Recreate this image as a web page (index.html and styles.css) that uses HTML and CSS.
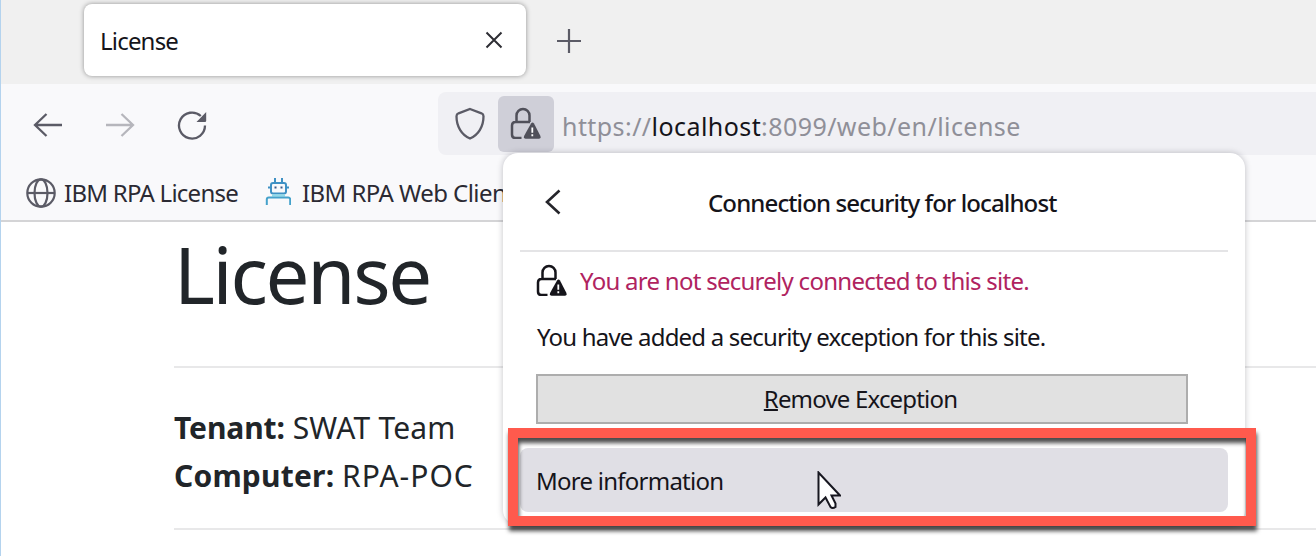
FILE: index.html
```html
<!DOCTYPE html>
<html lang="en">
<head>
<meta charset="utf-8">
<title>License</title>
<link rel="stylesheet" href="styles.css">
</head>
<body>
<svg class="defs" width="0" height="0">
  <symbol id="lock-warning" viewBox="0 0 30 32">
    <path d="M6 15V8.500a6.500 6.500 0 0 1 13 0V15M11 31H5q-3.500 0-3.500-3.500V18.500q0-3.500 3.500-3.500h14.500" fill="none" stroke="currentColor" stroke-width="2.500"/>
    <path d="M20.500 16.500q1.500-2 3 0l6.300 12.200q1 3-1.300 3H15q-2.300 0-1.300-3z" fill="currentColor"/>
    <path d="M21.800 20.500v5.200M21.800 27.300v2" stroke="#fff" stroke-width="1.800"/>
  </symbol>
</svg>
<div class="browser">
  <header class="tab-bar">
    <div class="tab">
      <span class="t tab-title">License</span>
      <svg class="close" viewBox="0 0 18 18"><path d="M1.500 1.500l15 15M16.500 1.500l-15 15"/></svg>
    </div>
    <svg class="plus" viewBox="0 0 26 26"><path d="M13 1v24M1 13h24"/></svg>
  </header>
  <nav class="nav-bar">
    <div class="controls">
      <svg class="arrow" viewBox="0 0 30 26"><path d="M29 13H2M13.500 2L2 13l11.500 11"/></svg>
      <svg class="arrow forward" viewBox="0 0 30 26"><path d="M1 13h27M16.500 2L28 13 16.500 24"/></svg>
      <svg class="reload" viewBox="0 0 32 30"><path d="M29 15.500A13 13 0 1 1 24.800 6" fill="none" stroke="currentColor" stroke-width="2.300"/><path d="M30.200 2v8.800q0 1.200-1.200 1.200H20.500z" fill="currentColor"/></svg>
    </div>
    <div class="url-bar">
      <svg class="shield" viewBox="0 0 30 32"><path d="M15 1.500l11.500 4.300q2 .8 2 3C28.500 19 23.500 27.500 15 31 6.500 27.500 1.500 19 1.500 8.800q0-2.200 2-3z"/></svg>
      <span class="identity"><svg class="lock"><use href="#lock-warning"/></svg></span>
      <span class="t url">https://<b>localhost</b>:8099/web/en/license</span>
    </div>
  </nav>
  <div class="bookmarks">
    <svg class="globe" viewBox="0 0 30 30"><circle cx="15" cy="15" r="13.700"/><ellipse cx="15" cy="15" rx="6.500" ry="13.700"/><path d="M1.500 15h27"/></svg>
    <span class="t bookmark-license">IBM RPA License</span>
    <svg class="robot" viewBox="0 0 26 28"><g fill="none" stroke="#3f91c4" stroke-width="2"><path d="M10 0v5M17 0v5M3 9.500h3M21 9.500h3"/><rect x="6" y="5" width="15" height="10.500" rx="2"/><path d="M7 17.500h13" stroke="#8fdcea"/><path d="M1.800 27v-5.500q0-2 2-2h19.400q2 0 2 2V27" stroke="#45a2cb"/></g><path d="M9.500 8.500h2v2h-2zM15.500 8.500h2v2h-2z" fill="#3b5a88"/></svg>
    <span class="t bookmark-client">IBM RPA Web Client</span>
  </div>
  <main class="page">
    <h1 class="t heading">License</h1>
    <div class="details">
      <p class="t"><b class="tenant-key">Tenant:</b> <span class="tenant">SWAT Team</span></p>
      <p class="t"><b class="computer-key">Computer:</b> <span class="computer">RPA-POC</span></p>
    </div>
  </main>
</div>
<section class="panel">
  <div class="panel-header">
    <svg class="chevron" viewBox="0 0 16 26"><path d="M14.500 1.500L2 13l12.500 11.500"/></svg>
    <span class="t panel-title">Connection security for localhost</span>
  </div>
  <div class="status"><svg class="lock"><use href="#lock-warning"/></svg><span class="t insecure">You are not securely connected to this site.</span></div>
  <p class="t exception">You have added a security exception for this site.</p>
  <div class="remove"><span class="t remove-label"><u>R</u>emove Exception</span></div>
  <div class="more"><span class="t more-label">More information</span></div>
</section>
<div class="highlight"></div>
<svg class="cursor" viewBox="0 0 24 39"><path d="M1.500 1.500v32l7-7 5 9.500q2 2 5 0v-3.500l-4-8h8.500z" fill="#fff" stroke="#171720" stroke-width="2"/></svg>
</body>
</html>
```
FILE: styles.css
```css
* { box-sizing: border-box; }
body {
  margin: 0;
  width: 1316px;
  height: 556px;
  position: relative;
  overflow: hidden;
  background: #fff;
  color: #15141a;
  font: 24px/32px "Noto Sans", "Open Sans", sans-serif;
}
.defs { position: absolute; }
svg { display: block; flex: none; }
.t { white-space: nowrap; flex: none; }
.browser { height: 556px; border-left: 1px solid #b4d3ee; }
.tab-bar {
  height: 84px;
  padding: 4px 0 8px 83px;
  display: flex;
  align-items: center;
  background: #f0f0f0;
}
.tab {
  width: 442px;
  height: 72px;
  padding: 0 23px 0 16px;
  display: flex;
  align-items: center;
  justify-content: space-between;
  border-radius: 8px;
  background: #fff;
  box-shadow: 0 0 5px rgba(0, 0, 0, .4);
}
.tab-title { letter-spacing: -.8px; padding-top: 2px; }
.close { width: 18px; height: 18px; fill: none; stroke: #2e2e34; stroke-width: 2; }
.plus { width: 26px; height: 26px; margin: 2px 0 0 30px; fill: none; stroke: #5b5b66; stroke-width: 2.2; }
.nav-bar { height: 84px; padding-top: 8px; display: flex; background: #f9f9fb; }
.controls { width: 437px; height: 66px; padding-left: 32px; display: flex; align-items: center; gap: 42px; color: #5b5b66; }
.arrow { width: 30px; height: 26px; fill: none; stroke: #5b5b66; stroke-width: 2.3; }
.forward { opacity: .42; }
.reload { width: 32px; height: 30px; margin-left: -1px; }
.url-bar { flex: 1; height: 63px; padding: 4px 0 0 17px; display: flex; background: #f0f0f4; border-radius: 8px 0 0 8px; }
.shield { width: 30px; height: 33px; margin: 11px 13px 0 0; fill: none; stroke: #5b5b66; stroke-width: 2.3; }
.identity { width: 56px; height: 56px; padding: 11px 12px; border-radius: 6px; background: #cfcfd8; color: #50505a; }
.lock { width: 31px; height: 32px; }
.url { padding: 14px 0 0 8px; color: #8f8f98; font-size: 25px; letter-spacing: .43px; }
.url b { font-weight: 400; color: #15141a; }
.bookmarks { height: 54px; padding: 0 0 2px 25px; display: flex; align-items: center; border-bottom: 2px solid #d4d4d6; background: #f9f9fb; color: #2b2a33; }
.globe { width: 30px; height: 30px; fill: none; stroke: #5b5b66; stroke-width: 2.2; }
.bookmark-license { width: 201px; padding-left: 8px; letter-spacing: -.75px; }
.robot { width: 26px; height: 28px; margin: 0 11px 3px 8px; }
.bookmark-client { letter-spacing: -.57px; }
.page { padding: 0 0 0 173px; color: #212529; }
.heading { margin: 0; height: 146px; border-bottom: 2px solid #e8e8e9; font-size: 78px; line-height: 105px; font-weight: 400; letter-spacing: -2.3px; }
.details { height: 162px; padding-top: 36px; border-bottom: 2px solid #e8e8e9; font-size: 30px; line-height: 48px; }
.details p { margin: 0; }
.tenant-key { letter-spacing: -.1px; }
.tenant { letter-spacing: .2px; }
.computer-key { letter-spacing: .2px; }
.computer { letter-spacing: 1px; }
.panel {
  position: absolute;
  left: 503px;
  top: 153px;
  width: 742px;
  height: 372px;
  padding: 0 17px;
  border-radius: 15px;
  background: #fff;
  box-shadow: 0 0 6px rgba(20, 20, 35, .25);
}
.panel-header { height: 99px; padding-left: 25px; display: flex; align-items: center; border-bottom: 2px solid #e4e4e6; }
.chevron { width: 16px; height: 26px; fill: none; stroke: #25252b; stroke-width: 2.6; }
.panel-title { margin: 3px 0 0 147px; font-weight: 500; letter-spacing: -.88px; }
.status { height: 58px; padding: 0 0 2px 16px; display: flex; align-items: center; }
.insecure { padding: 2px 0 0 13px; color: #b0235f; letter-spacing: -.73px; }
.exception { height: 64px; margin: 0; padding: 11px 0 0 17px; letter-spacing: -.8px; }
.remove { width: 652px; height: 50px; margin-left: 16px; padding-right: 3px; display: flex; align-items: center; justify-content: center; border: 2px solid #adadad; background: #e1e1e1; }
.remove-label { letter-spacing: -.82px; }
.remove u { text-decoration-thickness: 2px; }
.more { height: 64px; margin-top: 24px; padding: 2px 0 0 16px; display: flex; align-items: center; border-radius: 8px; background: #e0dfe5; }
.more-label { letter-spacing: -.75px; }
.highlight { position: absolute; left: 508px; top: 428px; width: 748px; height: 98px; border: 10px solid #ff5a4d; filter: drop-shadow(1px 5px 2px rgba(0, 0, 0, .7)); }
.cursor { position: absolute; left: 817px; top: 471px; width: 24px; height: 39px; }
```
